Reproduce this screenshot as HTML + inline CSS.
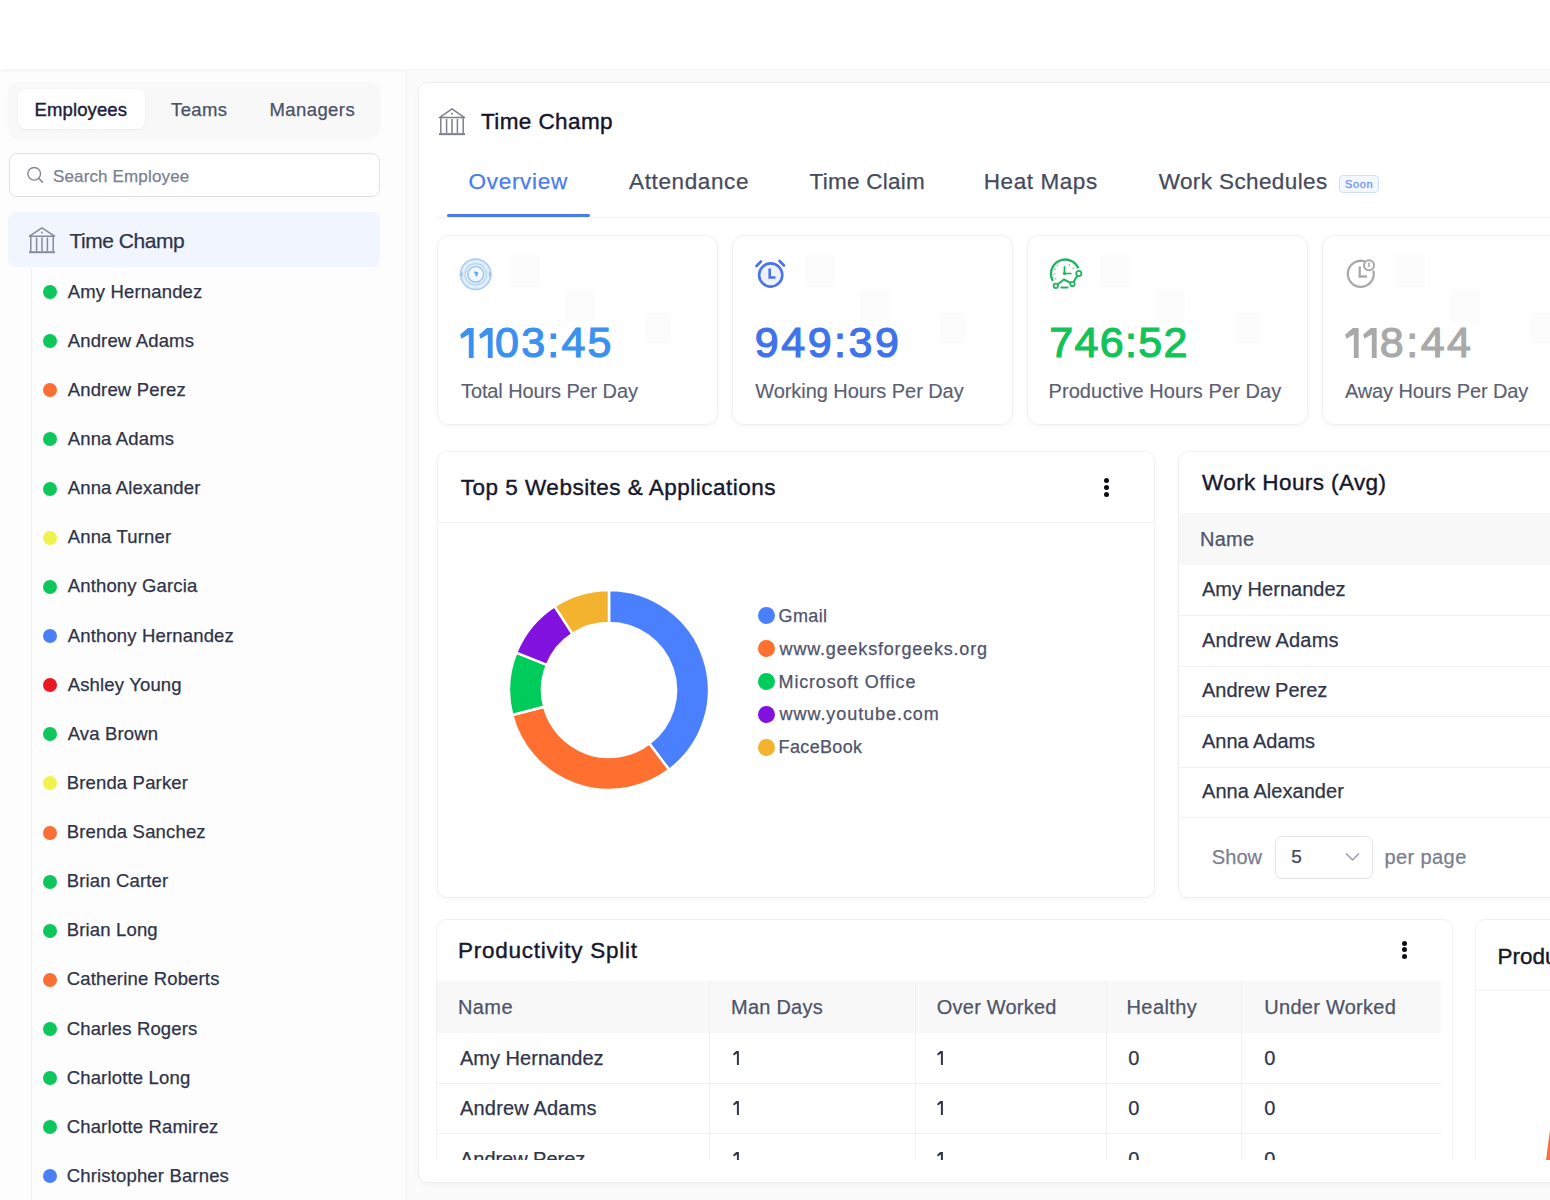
<!DOCTYPE html><html><head><meta charset="utf-8"><style>*{margin:0;padding:0;box-sizing:border-box}
html,body{width:1550px;height:1200px;overflow:hidden;background:#fbfbfb;font-family:"Liberation Sans",sans-serif;position:relative}
.a{position:absolute}
.t{position:absolute;white-space:nowrap;line-height:1;-webkit-text-stroke:0.25px currentColor}
svg{position:absolute;overflow:visible}
</style></head><body>
<div class="a" style="left:0px;top:0px;width:1550px;height:69px;background:#fff;box-shadow:0 1px 3px rgba(0,0,0,0.035)"></div>
<div class="a" style="left:0px;top:72px;width:405px;height:1128px;background:#fdfdfd;box-shadow:1px 0 3px rgba(0,0,0,0.03)"></div>
<div class="a" style="left:8px;top:82px;width:372px;height:55px;background:#f8f8f9;border-radius:10px;box-shadow:0 2px 3px rgba(0,0,0,0.025)"></div>
<div class="a" style="left:18px;top:89px;width:127px;height:40px;background:#fff;border-radius:8px;box-shadow:0 1px 3px rgba(0,0,0,0.05)"></div>
<div class="t" style="left:34.50px;top:101.00px;font-size:18.5px;letter-spacing:0.125px;color:#1d2039;font-weight:normal;-webkit-text-stroke:0.4px currentColor">Employees</div>
<div class="t" style="left:171.10px;top:101.00px;font-size:18.5px;letter-spacing:0.325px;color:#4b5066;font-weight:normal;">Teams</div>
<div class="t" style="left:269.40px;top:101.00px;font-size:18.5px;letter-spacing:0.429px;color:#4b5066;font-weight:normal;">Managers</div>
<div class="a" style="left:9px;top:153px;width:371px;height:44px;background:#fff;border:1px solid #dfe0e4;border-radius:8px"></div>
<svg style="left:26px;top:166px" width="18" height="18" viewBox="0 0 18 18"><circle cx="8.2" cy="7.8" r="6.3" fill="none" stroke="#858896" stroke-width="1.4"/><line x1="12.8" y1="12.4" x2="16.5" y2="16.2" stroke="#858896" stroke-width="1.6" stroke-linecap="round"/></svg>
<div class="t" style="left:53.00px;top:168.00px;font-size:17px;letter-spacing:0.143px;color:#7b8092;font-weight:normal;">Search Employee</div>
<div class="a" style="left:8px;top:212px;width:372px;height:55px;background:#f0f5fe;border-radius:8px"></div>
<svg style="left:28px;top:226px" width="28" height="28" viewBox="0 0 28 28" preserveAspectRatio="none" fill="none" stroke="#878a9a" stroke-width="1.5"><path d="M1.5 10.2 L14 1.8 L26.5 10.2 Z" stroke-linejoin="round"/><circle cx="14" cy="6.6" r="1" fill="#878a9a" stroke="none"/><line x1="2.8" y1="10.5" x2="2.8" y2="25.5"/><line x1="8.6" y1="11.5" x2="8.6" y2="25"/><line x1="14" y1="11.5" x2="14" y2="25"/><line x1="19.4" y1="11.5" x2="19.4" y2="25"/><line x1="25.2" y1="10.5" x2="25.2" y2="25.5"/><line x1="1" y1="26.2" x2="27" y2="26.2" stroke-width="2"/></svg>
<div class="t" style="left:69.50px;top:230.00px;font-size:21px;letter-spacing:-0.478px;color:#303447;font-weight:normal;">Time Champ</div>
<div class="a" style="left:31px;top:268px;width:1px;height:932px;background:#eef0f2"></div>
<div class="a" style="left:43px;top:285.10px;width:14px;height:14px;border-radius:50%;background:#0dc65c"></div>
<div class="t" style="left:67.70px;top:283.00px;font-size:18.5px;letter-spacing:0.163px;color:#2f3347;font-weight:normal;">Amy Hernandez</div>
<div class="a" style="left:43px;top:334.23px;width:14px;height:14px;border-radius:50%;background:#0dc65c"></div>
<div class="t" style="left:67.70px;top:332.00px;font-size:18.5px;letter-spacing:0.163px;color:#2f3347;font-weight:normal;">Andrew Adams</div>
<div class="a" style="left:43px;top:383.36px;width:14px;height:14px;border-radius:50%;background:#fb6e34"></div>
<div class="t" style="left:67.70px;top:381.00px;font-size:18.5px;letter-spacing:0.163px;color:#2f3347;font-weight:normal;">Andrew Perez</div>
<div class="a" style="left:43px;top:432.49px;width:14px;height:14px;border-radius:50%;background:#0dc65c"></div>
<div class="t" style="left:67.70px;top:430.00px;font-size:18.5px;letter-spacing:0.163px;color:#2f3347;font-weight:normal;">Anna Adams</div>
<div class="a" style="left:43px;top:481.62px;width:14px;height:14px;border-radius:50%;background:#0dc65c"></div>
<div class="t" style="left:67.70px;top:479.00px;font-size:18.5px;letter-spacing:0.163px;color:#2f3347;font-weight:normal;">Anna Alexander</div>
<div class="a" style="left:43px;top:530.75px;width:14px;height:14px;border-radius:50%;background:#f0f24e"></div>
<div class="t" style="left:67.70px;top:528.00px;font-size:18.5px;letter-spacing:0.163px;color:#2f3347;font-weight:normal;">Anna Turner</div>
<div class="a" style="left:43px;top:579.88px;width:14px;height:14px;border-radius:50%;background:#0dc65c"></div>
<div class="t" style="left:67.70px;top:577.00px;font-size:18.5px;letter-spacing:0.163px;color:#2f3347;font-weight:normal;">Anthony Garcia</div>
<div class="a" style="left:43px;top:629.01px;width:14px;height:14px;border-radius:50%;background:#4a7ff6"></div>
<div class="t" style="left:67.70px;top:627.00px;font-size:18.5px;letter-spacing:0.163px;color:#2f3347;font-weight:normal;">Anthony Hernandez</div>
<div class="a" style="left:43px;top:678.14px;width:14px;height:14px;border-radius:50%;background:#ea1822"></div>
<div class="t" style="left:67.70px;top:676.00px;font-size:18.5px;letter-spacing:0.163px;color:#2f3347;font-weight:normal;">Ashley Young</div>
<div class="a" style="left:43px;top:727.27px;width:14px;height:14px;border-radius:50%;background:#0dc65c"></div>
<div class="t" style="left:67.70px;top:725.00px;font-size:18.5px;letter-spacing:0.163px;color:#2f3347;font-weight:normal;">Ava Brown</div>
<div class="a" style="left:43px;top:776.40px;width:14px;height:14px;border-radius:50%;background:#f0f24e"></div>
<div class="t" style="left:66.70px;top:774.00px;font-size:18.5px;letter-spacing:0.163px;color:#2f3347;font-weight:normal;">Brenda Parker</div>
<div class="a" style="left:43px;top:825.53px;width:14px;height:14px;border-radius:50%;background:#fb6e34"></div>
<div class="t" style="left:66.70px;top:823.00px;font-size:18.5px;letter-spacing:0.163px;color:#2f3347;font-weight:normal;">Brenda Sanchez</div>
<div class="a" style="left:43px;top:874.66px;width:14px;height:14px;border-radius:50%;background:#0dc65c"></div>
<div class="t" style="left:66.70px;top:872.00px;font-size:18.5px;letter-spacing:0.163px;color:#2f3347;font-weight:normal;">Brian Carter</div>
<div class="a" style="left:43px;top:923.79px;width:14px;height:14px;border-radius:50%;background:#0dc65c"></div>
<div class="t" style="left:66.70px;top:921.00px;font-size:18.5px;letter-spacing:0.163px;color:#2f3347;font-weight:normal;">Brian Long</div>
<div class="a" style="left:43px;top:972.92px;width:14px;height:14px;border-radius:50%;background:#fb6e34"></div>
<div class="t" style="left:66.70px;top:970.00px;font-size:18.5px;letter-spacing:0.163px;color:#2f3347;font-weight:normal;">Catherine Roberts</div>
<div class="a" style="left:43px;top:1022.05px;width:14px;height:14px;border-radius:50%;background:#0dc65c"></div>
<div class="t" style="left:66.70px;top:1020.00px;font-size:18.5px;letter-spacing:0.163px;color:#2f3347;font-weight:normal;">Charles Rogers</div>
<div class="a" style="left:43px;top:1071.18px;width:14px;height:14px;border-radius:50%;background:#0dc65c"></div>
<div class="t" style="left:66.70px;top:1069.00px;font-size:18.5px;letter-spacing:0.163px;color:#2f3347;font-weight:normal;">Charlotte Long</div>
<div class="a" style="left:43px;top:1120.31px;width:14px;height:14px;border-radius:50%;background:#0dc65c"></div>
<div class="t" style="left:66.70px;top:1118.00px;font-size:18.5px;letter-spacing:0.163px;color:#2f3347;font-weight:normal;">Charlotte Ramirez</div>
<div class="a" style="left:43px;top:1169.44px;width:14px;height:14px;border-radius:50%;background:#4a7ff6"></div>
<div class="t" style="left:66.70px;top:1167.00px;font-size:18.5px;letter-spacing:0.163px;color:#2f3347;font-weight:normal;">Christopher Barnes</div>
<div class="a" style="left:418px;top:82px;width:1160px;height:1101px;background:#fff;border:1px solid #efeff1;border-radius:10px;box-shadow:0 2px 6px rgba(0,0,0,0.035)"></div>
<svg style="left:438px;top:107px" width="28" height="29" viewBox="0 0 28 28" preserveAspectRatio="none" fill="none" stroke="#7d8091" stroke-width="1.5"><path d="M1.5 10.2 L14 1.8 L26.5 10.2 Z" stroke-linejoin="round"/><circle cx="14" cy="6.6" r="1" fill="#7d8091" stroke="none"/><line x1="2.8" y1="10.5" x2="2.8" y2="25.5"/><line x1="8.6" y1="11.5" x2="8.6" y2="25"/><line x1="14" y1="11.5" x2="14" y2="25"/><line x1="19.4" y1="11.5" x2="19.4" y2="25"/><line x1="25.2" y1="10.5" x2="25.2" y2="25.5"/><line x1="1" y1="26.2" x2="27" y2="26.2" stroke-width="2"/></svg>
<div class="t" style="left:481.00px;top:111.00px;font-size:22.5px;letter-spacing:0.400px;color:#15152b;font-weight:normal;-webkit-text-stroke:0.4px currentColor">Time Champ</div>
<div class="t" style="left:468.50px;top:171.00px;font-size:22.5px;letter-spacing:0.714px;color:#4a7cf0;font-weight:normal;">Overview</div>
<div class="t" style="left:629.00px;top:171.00px;font-size:22.5px;letter-spacing:0.622px;color:#464a5c;font-weight:normal;">Attendance</div>
<div class="t" style="left:809.60px;top:171.00px;font-size:22.5px;letter-spacing:0.256px;color:#464a5c;font-weight:normal;">Time Claim</div>
<div class="t" style="left:983.80px;top:171.00px;font-size:22.5px;letter-spacing:0.575px;color:#464a5c;font-weight:normal;">Heat Maps</div>
<div class="t" style="left:1158.70px;top:171.00px;font-size:22.5px;letter-spacing:0.392px;color:#464a5c;font-weight:normal;">Work Schedules</div>
<div class="a" style="left:1339px;top:175px;width:40px;height:18px;border:1px solid #cfdcfa;background:#f4f7ff;border-radius:4px"></div>
<div class="t" style="left:1345.00px;top:179.00px;font-size:11px;letter-spacing:0.667px;color:#6a8ff0;font-weight:normal;">Soon</div>
<div class="a" style="left:435px;top:217px;width:1115px;height:1px;background:#f1f1f3"></div>
<div class="a" style="left:447px;top:214px;width:143px;height:3px;background:#4a7cf0;border-radius:2px"></div>
<div class="a" style="left:437px;top:235px;width:281px;height:190px;background:#fff;border:1px solid #f0f0f2;border-radius:12px;box-shadow:0 2px 5px rgba(0,0,0,0.035)"></div>
<div class="a" style="left:732px;top:235px;width:281px;height:190px;background:#fff;border:1px solid #f0f0f2;border-radius:12px;box-shadow:0 2px 5px rgba(0,0,0,0.035)"></div>
<div class="a" style="left:1027px;top:235px;width:281px;height:190px;background:#fff;border:1px solid #f0f0f2;border-radius:12px;box-shadow:0 2px 5px rgba(0,0,0,0.035)"></div>
<div class="a" style="left:1322px;top:235px;width:281px;height:190px;background:#fff;border:1px solid #f0f0f2;border-radius:12px;box-shadow:0 2px 5px rgba(0,0,0,0.035)"></div>
<div class="a" style="left:510px;top:255px;width:30px;height:32px;background:#fcfcfc"></div>
<div class="a" style="left:565px;top:290px;width:30px;height:32px;background:#fcfcfc"></div>
<div class="a" style="left:645px;top:313px;width:26px;height:30px;background:#fcfcfc"></div>
<div class="a" style="left:805px;top:255px;width:30px;height:32px;background:#fcfcfc"></div>
<div class="a" style="left:860px;top:290px;width:30px;height:32px;background:#fcfcfc"></div>
<div class="a" style="left:940px;top:313px;width:26px;height:30px;background:#fcfcfc"></div>
<div class="a" style="left:1100px;top:255px;width:30px;height:32px;background:#fcfcfc"></div>
<div class="a" style="left:1155px;top:290px;width:30px;height:32px;background:#fcfcfc"></div>
<div class="a" style="left:1235px;top:313px;width:26px;height:30px;background:#fcfcfc"></div>
<div class="a" style="left:1395px;top:255px;width:30px;height:32px;background:#fcfcfc"></div>
<div class="a" style="left:1450px;top:290px;width:30px;height:32px;background:#fcfcfc"></div>
<div class="a" style="left:1530px;top:313px;width:26px;height:30px;background:#fcfcfc"></div>
<svg style="left:460.40px;top:327.50px" width="14" height="30" viewBox="0 0 13.6 29.8"><path d="M7.6 0 L13.4 0 L13.4 29.8 L8.6 29.8 L8.6 6.4 L1.2 10.8 L0 6.6 Z" fill="#3a91ef"/></svg>
<svg style="left:478.50px;top:327.50px" width="14" height="30" viewBox="0 0 13.6 29.8"><path d="M7.6 0 L13.4 0 L13.4 29.8 L8.6 29.8 L8.6 6.4 L1.2 10.8 L0 6.6 Z" fill="#3a91ef"/></svg>
<div class="t" style="left:495.00px;top:321.00px;font-size:43px;letter-spacing:2.225px;color:#3a91ef;font-weight:normal;-webkit-text-stroke:1.2px #3a91ef">03:45</div>
<div class="t" style="left:754.70px;top:321px;font-size:43px;font-weight:normal;color:#4073eb;-webkit-text-stroke:1.2px #4073eb"><span style="letter-spacing:2.54px">9</span><span style="letter-spacing:2.54px">4</span><span style="letter-spacing:2.54px">9</span><span style="letter-spacing:2.54px">:</span><span style="letter-spacing:2.54px">3</span><span style="letter-spacing:2.54px">9</span></div>
<div class="t" style="left:1049.20px;top:321px;font-size:43px;font-weight:normal;color:#12c35a;-webkit-text-stroke:1.2px #12c35a"><span style="letter-spacing:1.32px">7</span><span style="letter-spacing:1.32px">4</span><span style="letter-spacing:1.32px">6</span><span style="letter-spacing:1.32px">:</span><span style="letter-spacing:1.32px">5</span><span style="letter-spacing:1.32px">2</span></div>
<svg style="left:1345.20px;top:327.50px" width="14" height="30" viewBox="0 0 13.6 29.8"><path d="M7.6 0 L13.4 0 L13.4 29.8 L8.6 29.8 L8.6 6.4 L1.2 10.8 L0 6.6 Z" fill="#a9a9a9"/></svg>
<svg style="left:1362.70px;top:327.50px" width="14" height="30" viewBox="0 0 13.6 29.8"><path d="M7.6 0 L13.4 0 L13.4 29.8 L8.6 29.8 L8.6 6.4 L1.2 10.8 L0 6.6 Z" fill="#a9a9a9"/></svg>
<div class="t" style="left:1379.80px;top:321.00px;font-size:43px;letter-spacing:2.500px;color:#a9a9a9;font-weight:normal;-webkit-text-stroke:1.2px #a9a9a9">8:44</div>
<div class="t" style="left:461.00px;top:381.00px;font-size:20px;letter-spacing:-0.111px;color:#5b6072;font-weight:normal;-webkit-text-stroke:0.15px currentColor">Total Hours Per Day</div>
<div class="t" style="left:755.20px;top:381.00px;font-size:20px;letter-spacing:-0.060px;color:#5b6072;font-weight:normal;-webkit-text-stroke:0.15px currentColor">Working Hours Per Day</div>
<div class="t" style="left:1048.50px;top:381.00px;font-size:20px;letter-spacing:0.065px;color:#5b6072;font-weight:normal;-webkit-text-stroke:0.15px currentColor">Productive Hours Per Day</div>
<div class="t" style="left:1344.90px;top:381.00px;font-size:20px;letter-spacing:-0.112px;color:#5b6072;font-weight:normal;-webkit-text-stroke:0.15px currentColor">Away Hours Per Day</div>
<svg style="left:455px;top:255px" width="40" height="40" viewBox="0 0 40 40" fill="none"><circle cx="20.7" cy="19.3" r="12.8" stroke="#e2eefd" stroke-width="5"/><circle cx="20.7" cy="19.3" r="15.2" stroke="#a8cbf5" stroke-width="1.6"/><circle cx="20.7" cy="19.3" r="10.6" stroke="#b5d4f7" stroke-width="1.4"/><circle cx="20.7" cy="19.3" r="8" stroke="#a0c8f5" stroke-width="1.8" fill="#f3f8fe"/><path d="M4.5 19.5 L7.5 16.5 L7.5 22 Z" fill="#9cc4f3"/><path d="M36.9 19 L33.9 22 L33.9 16.5 Z" fill="#9cc4f3"/><path d="M19.3 17.3 L22 18.2 L21.2 21.2" stroke="#5ea6f2" stroke-width="2"/></svg>
<svg style="left:750px;top:255px" width="40" height="40" viewBox="0 0 40 40" fill="none" stroke="#4a72ea" stroke-width="2.6" stroke-linecap="round"><circle cx="20.7" cy="20" r="11.6" fill="#eef2fe"/><line x1="6.5" y1="11" x2="11" y2="6.5"/><line x1="29.5" y1="6" x2="34" y2="10.5"/><path d="M19.7 13.5 L19.7 22.5 L25.5 22.5" stroke-linecap="butt"/></svg>
<svg style="left:1045px;top:255px" width="40" height="40" viewBox="0 0 40 40" fill="none" stroke="#22b35e" stroke-width="2.4" stroke-linecap="round"><path d="M7.5 25 A13.5 13.5 0 1 1 33 12.5"/><line x1="19.5" y1="12" x2="19.5" y2="18.5" stroke-width="1.8"/><line x1="19.5" y1="18.5" x2="26" y2="18.5" stroke-width="1.6"/><circle cx="19.5" cy="18.5" r="1.6" fill="#22b35e" stroke="none"/><path d="M11 30.5 L19 24.5 L27.5 29 L33.5 18.5" stroke-width="2"/><circle cx="10.8" cy="30.8" r="2.2" fill="#fff" stroke-width="1.8"/><circle cx="27.5" cy="29" r="2.2" fill="#fff" stroke-width="1.8"/><circle cx="33.8" cy="18.5" r="2.6" fill="#fff" stroke-width="1.8"/><line x1="16.5" y1="32.5" x2="22.5" y2="32.5" stroke-width="2.2"/><g stroke-width="0.9" stroke="#5a9a78"><line x1="12" y1="10" x2="12.5" y2="11"/><line x1="9.5" y1="14" x2="10.5" y2="14.5"/><line x1="9" y1="19" x2="10" y2="19"/><line x1="10" y1="24" x2="11" y2="23.5"/><line x1="24.5" y1="9.5" x2="24" y2="10.5"/><line x1="29" y1="13" x2="28" y2="13.5"/></g></svg>
<svg style="left:1340px;top:255px" width="40" height="40" viewBox="0 0 40 40" fill="none" stroke="#a9a9a9" stroke-width="2.3" stroke-linecap="round"><path d="M24 6.2 A13 13 0 1 0 33.6 16.5"/><path d="M19.7 11.5 L19.7 21.5 L27 21.5" stroke-linecap="butt"/><circle cx="29" cy="10.3" r="5" fill="#fff" stroke-width="2"/><line x1="29" y1="8" x2="29" y2="11.5" stroke-width="1.5"/></svg>
<div class="a" style="left:437px;top:451px;width:718px;height:447px;background:#fff;border:1px solid #f0f0f2;border-radius:10px;box-shadow:0 2px 5px rgba(0,0,0,0.035)"></div>
<div class="t" style="left:460.80px;top:477.00px;font-size:22.5px;letter-spacing:0.493px;color:#17182e;font-weight:normal;-webkit-text-stroke:0.4px currentColor">Top 5 Websites &amp; Applications</div>
<div class="a" style="left:438px;top:522px;width:716px;height:1px;background:#f0f0f2"></div>
<div class="a" style="left:1104.0px;top:478.00px;width:5px;height:5px;border-radius:50%;background:#0c0c14"></div>
<div class="a" style="left:1104.0px;top:484.85px;width:5px;height:5px;border-radius:50%;background:#0c0c14"></div>
<div class="a" style="left:1104.0px;top:491.70px;width:5px;height:5px;border-radius:50%;background:#0c0c14"></div>
<svg style="left:0;top:0" width="1550" height="1200"><path d="M609.00 590.00 A100 100 0 0 1 669.18 769.86 L649.32 743.51 A67 67 0 0 0 609.00 623.00 Z" fill="#4a80fd" stroke="#fff" stroke-width="2.5"/><path d="M669.18 769.86 A100 100 0 0 1 512.19 715.04 L544.13 706.78 A67 67 0 0 0 649.32 743.51 Z" fill="#ff6f30" stroke="#fff" stroke-width="2.5"/><path d="M512.19 715.04 A100 100 0 0 1 516.28 652.54 L546.88 664.90 A67 67 0 0 0 544.13 706.78 Z" fill="#00cc5c" stroke="#fff" stroke-width="2.5"/><path d="M516.28 652.54 A100 100 0 0 1 554.54 606.13 L572.51 633.81 A67 67 0 0 0 546.88 664.90 Z" fill="#8212e0" stroke="#fff" stroke-width="2.5"/><path d="M554.54 606.13 A100 100 0 0 1 609.00 590.00 L609.00 623.00 A67 67 0 0 0 572.51 633.81 Z" fill="#f3b32f" stroke="#fff" stroke-width="2.5"/></svg>
<div class="a" style="left:757.5px;top:606.5px;width:17px;height:17px;border-radius:50%;background:#4a80fd"></div>
<div class="a" style="left:757.5px;top:639.5px;width:17px;height:17px;border-radius:50%;background:#ff6f30"></div>
<div class="a" style="left:757.5px;top:672.5px;width:17px;height:17px;border-radius:50%;background:#00cc5c"></div>
<div class="a" style="left:757.5px;top:705.5px;width:17px;height:17px;border-radius:50%;background:#8212e0"></div>
<div class="a" style="left:757.5px;top:738.5px;width:17px;height:17px;border-radius:50%;background:#f3b32f"></div>
<div class="t" style="left:778.60px;top:607.00px;font-size:18px;letter-spacing:0.350px;color:#50546a;font-weight:normal;">Gmail</div>
<div class="t" style="left:779.60px;top:640.00px;font-size:18px;letter-spacing:0.815px;color:#50546a;font-weight:normal;">www.geeksforgeeks.org</div>
<div class="t" style="left:778.60px;top:673.00px;font-size:18px;letter-spacing:0.807px;color:#50546a;font-weight:normal;">Microsoft Office</div>
<div class="t" style="left:779.60px;top:705.00px;font-size:18px;letter-spacing:0.936px;color:#50546a;font-weight:normal;">www.youtube.com</div>
<div class="t" style="left:778.60px;top:738.00px;font-size:18px;letter-spacing:0.343px;color:#50546a;font-weight:normal;">FaceBook</div>
<div class="a" style="left:1178px;top:451px;width:400px;height:447px;background:#fff;border:1px solid #f0f0f2;border-radius:10px;box-shadow:0 2px 5px rgba(0,0,0,0.035)"></div>
<div class="t" style="left:1202.00px;top:472.00px;font-size:22.5px;letter-spacing:0.400px;color:#17182e;font-weight:normal;-webkit-text-stroke:0.4px currentColor">Work Hours (Avg)</div>
<div class="a" style="left:1179px;top:513px;width:399px;height:52px;background:#f8f8f9"></div>
<div class="t" style="left:1200.00px;top:529.00px;font-size:20px;letter-spacing:0.267px;color:#4f5468;font-weight:normal;">Name</div>
<div class="t" style="left:1202.00px;top:579.00px;font-size:20px;letter-spacing:0.017px;color:#30354a;font-weight:normal;">Amy Hernandez</div>
<div class="a" style="left:1179px;top:615px;width:399px;height:1px;background:#f1f1f3"></div>
<div class="t" style="left:1202.00px;top:630.00px;font-size:20px;letter-spacing:0.182px;color:#30354a;font-weight:normal;">Andrew Adams</div>
<div class="a" style="left:1179px;top:666px;width:399px;height:1px;background:#f1f1f3"></div>
<div class="t" style="left:1202.00px;top:680.00px;font-size:20px;letter-spacing:-0.036px;color:#30354a;font-weight:normal;">Andrew Perez</div>
<div class="a" style="left:1179px;top:716px;width:399px;height:1px;background:#f1f1f3"></div>
<div class="t" style="left:1202.00px;top:731.00px;font-size:20px;letter-spacing:-0.033px;color:#30354a;font-weight:normal;">Anna Adams</div>
<div class="a" style="left:1179px;top:767px;width:399px;height:1px;background:#f1f1f3"></div>
<div class="t" style="left:1202.00px;top:781.00px;font-size:20px;letter-spacing:0.046px;color:#30354a;font-weight:normal;">Anna Alexander</div>
<div class="a" style="left:1179px;top:817px;width:399px;height:1px;background:#f1f1f3"></div>
<div class="t" style="left:1211.80px;top:847.00px;font-size:20px;letter-spacing:0.067px;color:#7a7e90;font-weight:normal;">Show</div>
<div class="a" style="left:1274.5px;top:836px;width:98.5px;height:42.5px;background:#fff;border:1px solid #e3e4e8;border-radius:7px"></div>
<div class="t" style="left:1291.30px;top:847.00px;font-size:19px;letter-spacing:0.000px;color:#43465a;font-weight:normal;">5</div>
<svg style="left:1344px;top:851px" width="17" height="12" viewBox="0 0 17 12"><path d="M2 2.5 L8.5 9 L15 2.5" fill="none" stroke="#9a9ca8" stroke-width="1.5"/></svg>
<div class="t" style="left:1384.50px;top:847.00px;font-size:20px;letter-spacing:0.400px;color:#7a7e90;font-weight:normal;">per page</div>
<div class="a" style="left:436px;top:919px;width:1017px;height:241px;overflow:hidden">
<div class="a" style="left:0px;top:0px;width:1017px;height:300px;background:#fff;border:1px solid #f0f0f2;border-radius:10px"></div>
</div>
<div class="t" style="left:458.00px;top:940.00px;font-size:22.5px;letter-spacing:0.753px;color:#17182e;font-weight:normal;-webkit-text-stroke:0.4px currentColor">Productivity Split</div>
<div class="a" style="left:1401.5px;top:940.50px;width:5px;height:5px;border-radius:50%;background:#0c0c14"></div>
<div class="a" style="left:1401.5px;top:947.35px;width:5px;height:5px;border-radius:50%;background:#0c0c14"></div>
<div class="a" style="left:1401.5px;top:954.20px;width:5px;height:5px;border-radius:50%;background:#0c0c14"></div>
<div class="a" style="left:437px;top:981px;width:1004px;height:179px;overflow:hidden">
<div class="a" style="left:0px;top:0px;width:1004px;height:52px;background:#f8f8f9"></div>
<div class="a" style="left:272px;top:0px;width:1px;height:200px;background:#f0f0f2"></div>
<div class="a" style="left:478px;top:0px;width:1px;height:200px;background:#f0f0f2"></div>
<div class="a" style="left:669px;top:0px;width:1px;height:200px;background:#f0f0f2"></div>
<div class="a" style="left:804px;top:0px;width:1px;height:200px;background:#f0f0f2"></div>
<div class="a" style="left:0px;top:102px;width:1004px;height:1px;background:#f1f1f3"></div>
<div class="a" style="left:0px;top:152px;width:1004px;height:1px;background:#f1f1f3"></div>
<div class="a" style="left:0px;top:202px;width:1004px;height:1px;background:#f1f1f3"></div>
</div>
<div class="t" style="left:458.00px;top:997.00px;font-size:20px;letter-spacing:0.400px;color:#4f5468;font-weight:normal;">Name</div>
<div class="t" style="left:731.00px;top:997.00px;font-size:20px;letter-spacing:0.243px;color:#4f5468;font-weight:normal;">Man Days</div>
<div class="t" style="left:936.80px;top:997.00px;font-size:20px;letter-spacing:0.220px;color:#4f5468;font-weight:normal;">Over Worked</div>
<div class="t" style="left:1126.50px;top:997.00px;font-size:20px;letter-spacing:0.417px;color:#4f5468;font-weight:normal;">Healthy</div>
<div class="t" style="left:1264.30px;top:997.00px;font-size:20px;letter-spacing:0.264px;color:#4f5468;font-weight:normal;">Under Worked</div>
<div class="a" style="left:0;top:0;width:1550px;height:1160px;overflow:hidden">
<div class="t" style="left:460.00px;top:1048.00px;font-size:20px;letter-spacing:0.017px;color:#30354a;font-weight:normal;">Amy Hernandez</div>
<svg style="left:733.00px;top:1050.90px" width="7" height="14" viewBox="0 0 7 14"><path d="M3.2 0 L5.9 0 L5.9 14 L3.9 14 L3.9 2.6 L0.9 4.6 L0 3.0 Z" fill="#30354a"/></svg>
<svg style="left:937.20px;top:1050.90px" width="7" height="14" viewBox="0 0 7 14"><path d="M3.2 0 L5.9 0 L5.9 14 L3.9 14 L3.9 2.6 L0.9 4.6 L0 3.0 Z" fill="#30354a"/></svg>
<div class="t" style="left:1128.20px;top:1048.00px;font-size:20px;letter-spacing:0.000px;color:#30354a;font-weight:normal;">0</div>
<div class="t" style="left:1264.30px;top:1048.00px;font-size:20px;letter-spacing:0.000px;color:#30354a;font-weight:normal;">0</div>
<div class="t" style="left:460.00px;top:1098.00px;font-size:20px;letter-spacing:0.182px;color:#30354a;font-weight:normal;">Andrew Adams</div>
<svg style="left:733.00px;top:1101.20px" width="7" height="14" viewBox="0 0 7 14"><path d="M3.2 0 L5.9 0 L5.9 14 L3.9 14 L3.9 2.6 L0.9 4.6 L0 3.0 Z" fill="#30354a"/></svg>
<svg style="left:937.20px;top:1101.20px" width="7" height="14" viewBox="0 0 7 14"><path d="M3.2 0 L5.9 0 L5.9 14 L3.9 14 L3.9 2.6 L0.9 4.6 L0 3.0 Z" fill="#30354a"/></svg>
<div class="t" style="left:1128.20px;top:1098.00px;font-size:20px;letter-spacing:0.000px;color:#30354a;font-weight:normal;">0</div>
<div class="t" style="left:1264.30px;top:1098.00px;font-size:20px;letter-spacing:0.000px;color:#30354a;font-weight:normal;">0</div>
<div class="t" style="left:460.00px;top:1149.00px;font-size:20px;letter-spacing:-0.036px;color:#30354a;font-weight:normal;">Andrew Perez</div>
<svg style="left:733.00px;top:1151.50px" width="7" height="14" viewBox="0 0 7 14"><path d="M3.2 0 L5.9 0 L5.9 14 L3.9 14 L3.9 2.6 L0.9 4.6 L0 3.0 Z" fill="#30354a"/></svg>
<svg style="left:937.20px;top:1151.50px" width="7" height="14" viewBox="0 0 7 14"><path d="M3.2 0 L5.9 0 L5.9 14 L3.9 14 L3.9 2.6 L0.9 4.6 L0 3.0 Z" fill="#30354a"/></svg>
<div class="t" style="left:1128.20px;top:1149.00px;font-size:20px;letter-spacing:0.000px;color:#30354a;font-weight:normal;">0</div>
<div class="t" style="left:1264.30px;top:1149.00px;font-size:20px;letter-spacing:0.000px;color:#30354a;font-weight:normal;">0</div>
</div>
<div class="a" style="left:1475px;top:919px;width:100px;height:241px;overflow:hidden">
<div class="a" style="left:0px;top:0px;width:200px;height:300px;background:#fff;border:1px solid #f0f0f2;border-radius:10px"></div>
<div class="a" style="left:1px;top:71px;width:199px;height:1px;background:#f0f0f2"></div>
<svg style="left:0;top:0" width="100" height="241"><path d="M71 241 L75 211 L80 211 L80 241 Z" fill="#ff6f30"/></svg>
</div>
<div class="t" style="left:1497.50px;top:946.00px;font-size:22.5px;letter-spacing:0.000px;color:#17182e;font-weight:normal;-webkit-text-stroke:0.4px currentColor">Produ</div>
</body></html>
